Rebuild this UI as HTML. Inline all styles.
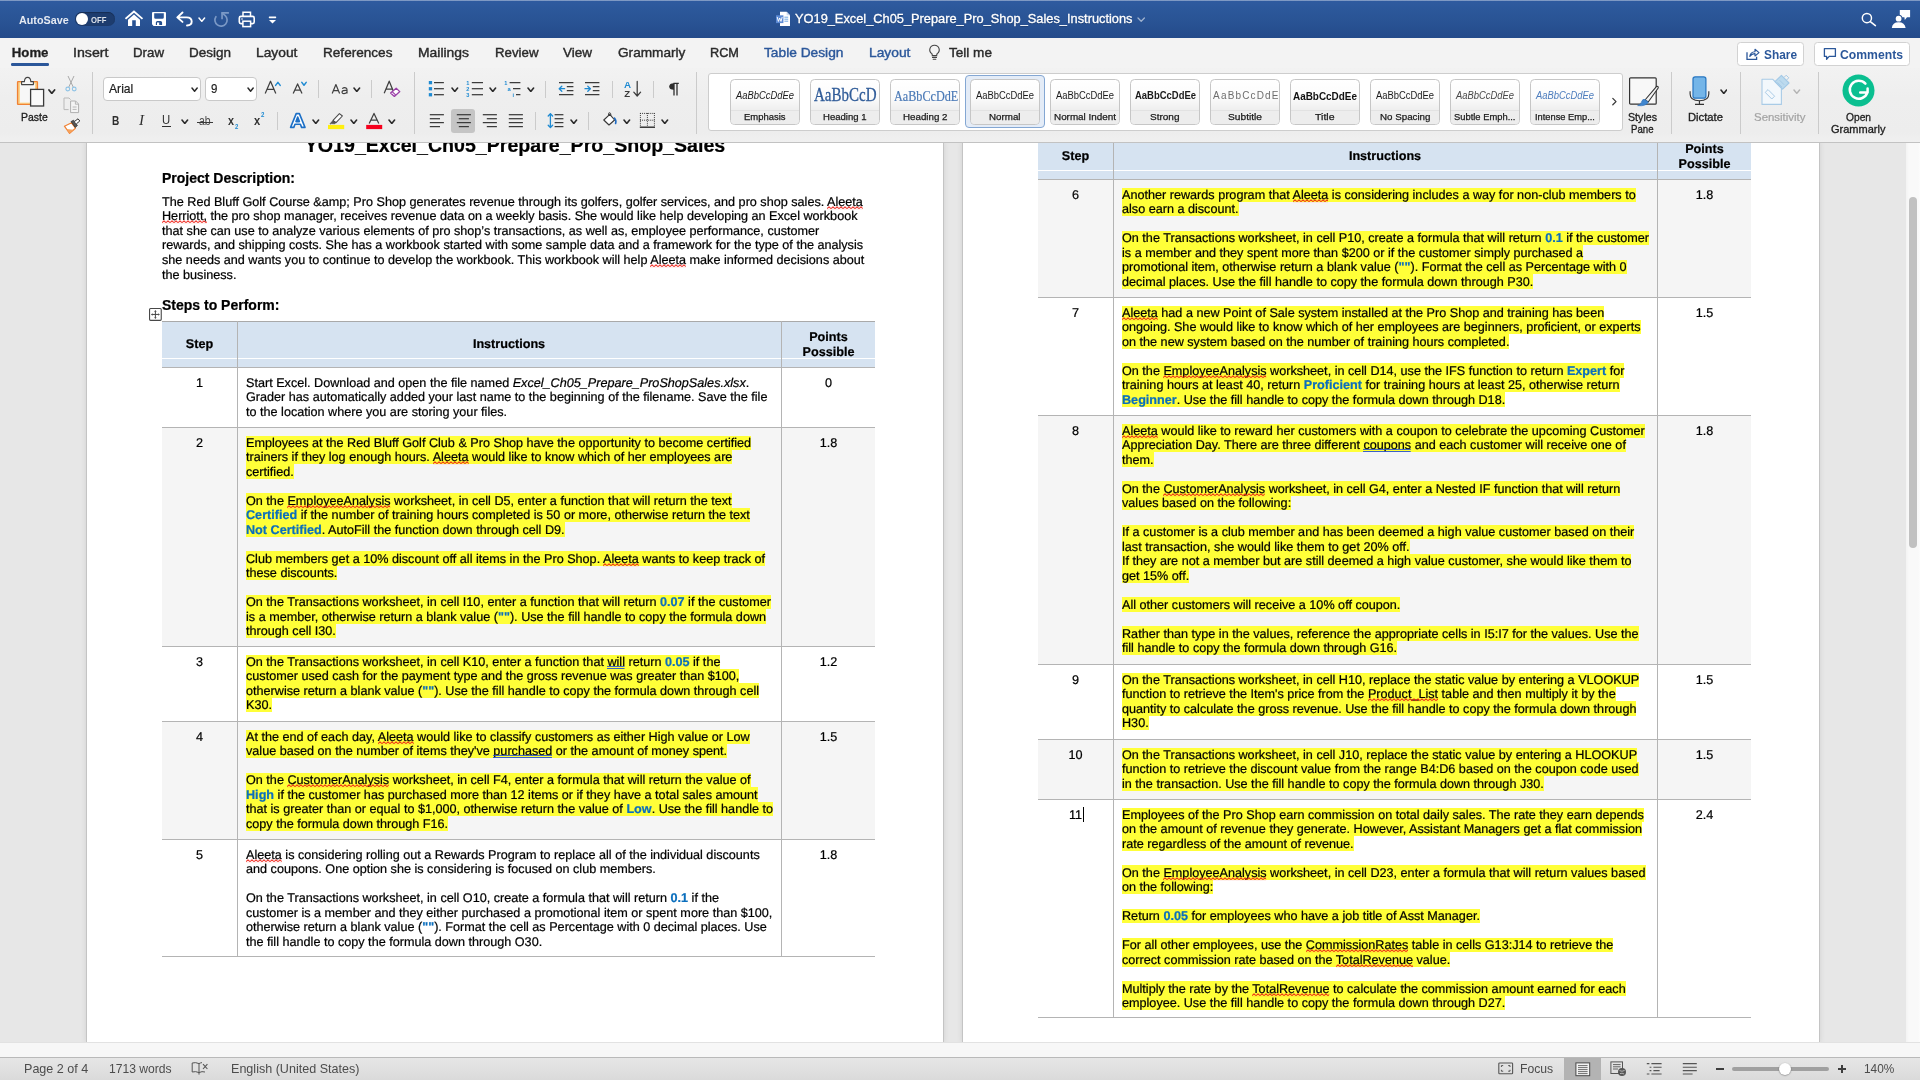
<!DOCTYPE html>
<html><head><meta charset="utf-8"><title>Word</title>
<style>
html,body{margin:0;padding:0;}
body{width:1920px;height:1080px;overflow:hidden;position:relative;background:#e7e7e7;
 font-family:"Liberation Sans",sans-serif;color:#000;}
*{box-sizing:border-box;}
#doc{position:absolute;left:0;top:0;width:1920px;height:1042px;overflow:hidden;background:transparent;will-change:transform;}
.page{position:absolute;top:142px;height:900px;background:#fff;box-shadow:0 0 0 1px #c4c4c4,0 0 6px 1px rgba(0,0,0,0.09);}
.t{position:absolute;text-rendering:geometricPrecision;font-size:12.634px;line-height:14.49px;height:14.49px;white-space:nowrap;color:#000;}
.t.c{text-align:center;}
.t.b{font-weight:bold;height:auto;}
.hl{background:#ffff38;display:inline-block;vertical-align:top;}
.tx{position:relative;}
.nh{display:inline-block;vertical-align:top;}
.bl{color:#0a6ebd;font-weight:bold;}
.ttl{position:absolute;font-size:19.6px;line-height:24px;font-weight:bold;text-align:center;white-space:nowrap;}
.h2{position:absolute;font-size:14px;line-height:16px;font-weight:bold;white-space:nowrap;}
.row{position:absolute;}
.hb{position:absolute;height:1px;background:#b4b4b4;}
.vb{position:absolute;width:1px;background:#b4b4b4;}
.mv{position:absolute;width:13px;height:13px;border:1px solid #6a6a6a;background:#fff;}
.mv svg{position:absolute;left:-0.5px;top:-0.5px;}
.sq{position:relative;z-index:2;}
.sq svg{position:absolute;left:0;top:11.2px;width:100%;height:3.6px;overflow:hidden;}
.gr{position:relative;z-index:2;}
.gr svg{position:absolute;left:0;top:10.6px;width:100%;height:4.4px;overflow:hidden;}
.cursor{display:inline-block;width:1.2px;height:15px;background:#000;vertical-align:top;margin-left:1px;margin-right:-2.2px;position:relative;top:-1px;}

/* ---------------- chrome ---------------- */
#titlebar{position:absolute;left:0;top:0;width:1920px;height:38px;background:linear-gradient(#2f5ba0 0px,#2c589b 8px,#295394 22px,#244b8a 38px);}
#tabs{position:absolute;left:0;top:38px;width:1920px;height:30px;background:#f3f3f3;}
#ribbon{position:absolute;left:0;top:68px;width:1920px;height:75px;background:linear-gradient(#f2f2f2 0,#eeeeee 30px,#ededed 64px,#f0f0f0 74px);border-bottom:1px solid #c2c2c2;}
#hscroll{position:absolute;left:0;top:1042px;width:1920px;height:15px;background:#f7f7f7;border-top:1px solid #e2e2e2;}
#status{position:absolute;left:0;top:1057px;width:1920px;height:23px;background:linear-gradient(#e6e6e6,#dadada);border-top:1px solid #b9b9b9;}
#vscroll{position:absolute;left:1906px;top:143px;width:14px;height:899px;background:linear-gradient(90deg,#f3f3f3,#f9f9f9 3px,#f9f9f9 12px,#fcfcfc);}
#vthumb{position:absolute;left:1909.2px;top:196.7px;width:7.6px;height:351.5px;border-radius:4px;background:#c1c1c1;}
.ui{position:absolute;white-space:nowrap;font-size:13px;line-height:16px;color:#262626;transform-origin:0 50%;}
.abs{position:absolute;}
.tile{border:1px solid #c6c6c6;border-radius:4.5px;background:linear-gradient(#ffffff 0%,#fbfbfb 40%,#efefef 67%,#efefef 100%);overflow:hidden;}
.tl{position:absolute;left:0;top:29.5px;width:100%;height:15px;background:#ededed;border-top:1px solid #e2e2e2;}
.t.p{font-size:12.648px;}
.t,.h2,.ttl{-webkit-text-stroke:0.22px currentColor;}
#chrome{position:absolute;left:0;top:0;width:1920px;height:1080px;will-change:transform;}

</style></head>
<body>
<svg width="0" height="0" style="position:absolute"><defs><pattern id="sqp" width="4" height="3.6" patternUnits="userSpaceOnUse"><path d="M-0.2 2.8 L2 0.8 L4.2 2.8" fill="none" stroke="#ee1a10" stroke-width="0.95" stroke-linejoin="round"/></pattern></defs></svg>
<div id="doc">
<div class="page" style="left:87px;width:856px"></div>
<div class="page" style="left:963px;width:856px"></div>
<div class="ttl" style="left:162px;top:132.5px;width:706px">YO19_Excel_Ch05_Prepare_Pro_Shop_Sales</div>
<div class="h2" style="left:162px;top:170px">Project Description:</div>
<div class="t p" style="left:162px;top:194.79px">The Red Bluff Golf Course &amp;amp; Pro Shop generates revenue through its golfers, golfer services, and pro shop sales. <span class="sq">Aleeta<svg><rect width="100%" height="3.6" fill="url(#sqp)"/></svg></span></div>
<div class="t p" style="left:162px;top:208.79px"><span class="sq">Herriott,<svg><rect width="100%" height="3.6" fill="url(#sqp)"/></svg></span> the pro shop manager, receives revenue data on a weekly basis. She would like help developing an Excel workbook</div>
<div class="t p" style="left:162px;top:223.79px">that she can use to analyze various elements of pro shop’s transactions, as well as, employee performance, customer</div>
<div class="t p" style="left:162px;top:237.79px">rewards, and shipping costs. She has a workbook started with some sample data and a framework for the type of the analysis</div>
<div class="t p" style="left:162px;top:252.79px">she needs and wants you to continue to develop the workbook. This workbook will help <span class="sq">Aleeta<svg><rect width="100%" height="3.6" fill="url(#sqp)"/></svg></span> make informed decisions about</div>
<div class="t p" style="left:162px;top:267.80px">the business.</div>
<div class="h2" style="left:162px;top:297px">Steps to Perform:</div>
<svg style="position:absolute;left:148px;top:307px" width="15" height="15" viewBox="0 0 15 15"><rect x="1.55" y="1.55" width="11.7" height="11.8" rx="1" fill="#fff" stroke="#484848" stroke-width="1.1"/><path d="M7.4 4 V10.9 M3.9 7.45 H10.9" stroke="#484848" stroke-width="1" fill="none"/><path d="M7.4 3 L8.7 4.7 H6.1 Z M7.4 11.9 L8.7 10.2 H6.1 Z M2.9 7.45 L4.6 6.15 V8.75 Z M11.9 7.45 L10.2 6.15 V8.75 Z" fill="#505050"/></svg>
<div class="row" style="left:162px;top:321px;width:713px;height:46px;background:#d6e3f1"></div>
<div class="hb" style="left:162px;top:321px;width:713px;background:#a9a9a9"></div>
<div class="hb" style="left:162px;top:358px;width:713px;background:#fff"></div>
<div class="hb" style="left:162px;top:367px;width:713px"></div>
<div class="t c b" style="left:162px;top:337.455px;width:75px">Step</div>
<div class="t c b" style="left:237px;top:337.455px;width:544px">Instructions</div>
<div class="t c b" style="left:782px;top:330.41px;width:93px">Points<br>Possible</div>
<div class="row" style="left:162px;top:368px;width:713px;height:60px;background:#fff"></div>
<div class="row" style="left:162px;top:428px;width:713px;height:219px;background:#f5f5f5"></div>
<div class="row" style="left:162px;top:647px;width:713px;height:75px;background:#fff"></div>
<div class="row" style="left:162px;top:722px;width:713px;height:118px;background:#f5f5f5"></div>
<div class="row" style="left:162px;top:840px;width:713px;height:117px;background:#fff"></div>
<div class="hb" style="left:162px;top:427px;width:713px"></div>
<div class="hb" style="left:162px;top:646px;width:713px"></div>
<div class="hb" style="left:162px;top:721px;width:713px"></div>
<div class="hb" style="left:162px;top:839px;width:713px"></div>
<div class="hb" style="left:162px;top:956px;width:713px"></div>
<div class="t c" style="left:162px;top:375.80px;width:75px">1</div>
<div class="t c" style="left:782px;top:375.80px;width:93px">0</div>
<div class="t" style="left:246px;top:376px;height:14px"><span class="nh" style="height:14px"><span class="tx" style="top:-0.20px">Start Excel. Download and open the file named <i>Excel_Ch05_Prepare_ProShopSales.xlsx</i>.</span></span></div>
<div class="t" style="left:246px;top:390px;height:14px"><span class="nh" style="height:14px"><span class="tx" style="top:-0.20px">Grader has automatically added your last name to the beginning of the filename. Save the file</span></span></div>
<div class="t" style="left:246px;top:404px;height:15px"><span class="nh" style="height:15px"><span class="tx" style="top:0.80px">to the location where you are storing your files.</span></span></div>
<div class="t c" style="left:162px;top:435.80px;width:75px">2</div>
<div class="t c" style="left:782px;top:435.80px;width:93px">1.8</div>
<div class="t" style="left:246px;top:436px;height:14px"><span class="hl" style="height:14px"><span class="tx" style="top:-0.20px">Employees at the Red Bluff Golf Club &amp; Pro Shop have the opportunity to become certified</span></span></div>
<div class="t" style="left:246px;top:450px;height:14px"><span class="hl" style="height:14px"><span class="tx" style="top:-0.20px">trainers if they log enough hours. <span class="sq">Aleeta<svg><rect width="100%" height="3.6" fill="url(#sqp)"/></svg></span> would like to know which of her employees are</span></span></div>
<div class="t" style="left:246px;top:464px;height:15px"><span class="hl" style="height:15px"><span class="tx" style="top:0.80px">certified.</span></span></div>
<div class="t" style="left:246px;top:493px;height:15px"><span class="hl" style="height:15px"><span class="tx" style="top:0.80px">On the <span class="sq">EmployeeAnalysis<svg><rect width="100%" height="3.6" fill="url(#sqp)"/></svg></span> worksheet, in cell D5, enter a function that will return the text</span></span></div>
<div class="t" style="left:246px;top:508px;height:14px"><span class="hl" style="height:14px"><span class="tx" style="top:-0.20px"><b class="bl">Certified</b> if the number of training hours completed is 50 or more, otherwise return the text</span></span></div>
<div class="t" style="left:246px;top:522px;height:15px"><span class="hl" style="height:15px"><span class="tx" style="top:0.79px"><b class="bl">Not Certified</b>. AutoFill the function down through cell D9.</span></span></div>
<div class="t" style="left:246px;top:551px;height:15px"><span class="hl" style="height:15px"><span class="tx" style="top:0.79px">Club members get a 10% discount off all items in the Pro Shop. <span class="sq">Aleeta<svg><rect width="100%" height="3.6" fill="url(#sqp)"/></svg></span> wants to keep track of</span></span></div>
<div class="t" style="left:246px;top:566px;height:14px"><span class="hl" style="height:14px"><span class="tx" style="top:-0.21px">these discounts.</span></span></div>
<div class="t" style="left:246px;top:595px;height:14px"><span class="hl" style="height:14px"><span class="tx" style="top:-0.21px">On the Transactions worksheet, in cell I10, enter a function that will return <b class="bl">0.07</b> if the customer</span></span></div>
<div class="t" style="left:246px;top:609px;height:15px"><span class="hl" style="height:15px"><span class="tx" style="top:0.79px">is a member, otherwise return a blank value (<b class="bl">""</b>). Use the fill handle to copy the formula down</span></span></div>
<div class="t" style="left:246px;top:624px;height:14px"><span class="hl" style="height:14px"><span class="tx" style="top:-0.21px">through cell I30.</span></span></div>
<div class="t c" style="left:162px;top:654.79px;width:75px">3</div>
<div class="t c" style="left:782px;top:654.79px;width:93px">1.2</div>
<div class="t" style="left:246px;top:655px;height:14px"><span class="hl" style="height:14px"><span class="tx" style="top:-0.21px">On the Transactions worksheet, in cell K10, enter a function that <span class="gr">will<svg><rect x="0" y="0.95" width="100%" height="0.9" fill="#2450d8"/><rect x="0" y="3" width="100%" height="0.9" fill="#2450d8"/></svg></span> return <b class="bl">0.05</b> if the</span></span></div>
<div class="t" style="left:246px;top:669px;height:14px"><span class="hl" style="height:14px"><span class="tx" style="top:-0.21px">customer used cash for the payment type and the gross revenue was greater than $100,</span></span></div>
<div class="t" style="left:246px;top:683px;height:15px"><span class="hl" style="height:15px"><span class="tx" style="top:0.79px">otherwise return a blank value (<b class="bl">""</b>). Use the fill handle to copy the formula down through cell</span></span></div>
<div class="t" style="left:246px;top:698px;height:14px"><span class="hl" style="height:14px"><span class="tx" style="top:-0.21px">K30.</span></span></div>
<div class="t c" style="left:162px;top:729.79px;width:75px">4</div>
<div class="t c" style="left:782px;top:729.79px;width:93px">1.5</div>
<div class="t" style="left:246px;top:730px;height:14px"><span class="hl" style="height:14px"><span class="tx" style="top:-0.21px">At the end of each day, <span class="sq">Aleeta<svg><rect width="100%" height="3.6" fill="url(#sqp)"/></svg></span> would like to classify customers as either High value or Low</span></span></div>
<div class="t" style="left:246px;top:744px;height:14px"><span class="hl" style="height:14px"><span class="tx" style="top:-0.21px">value based on the number of items they've <span class="gr">purchased<svg><rect x="0" y="0.95" width="100%" height="0.9" fill="#2450d8"/><rect x="0" y="3" width="100%" height="0.9" fill="#2450d8"/></svg></span> or the amount of money spent.</span></span></div>
<div class="t" style="left:246px;top:773px;height:14px"><span class="hl" style="height:14px"><span class="tx" style="top:-0.21px">On the <span class="sq">CustomerAnalysis<svg><rect width="100%" height="3.6" fill="url(#sqp)"/></svg></span> worksheet, in cell F4, enter a formula that will return the value of</span></span></div>
<div class="t" style="left:246px;top:787px;height:15px"><span class="hl" style="height:15px"><span class="tx" style="top:0.79px"><b class="bl">High</b> if the customer has purchased more than 12 items or if they have a total sales amount</span></span></div>
<div class="t" style="left:246px;top:802px;height:14px"><span class="hl" style="height:14px"><span class="tx" style="top:-0.21px">that is greater than or equal to $1,000, otherwise return the value of <b class="bl">Low</b>. Use the fill handle to</span></span></div>
<div class="t" style="left:246px;top:816px;height:15px"><span class="hl" style="height:15px"><span class="tx" style="top:0.79px">copy the formula down through F16.</span></span></div>
<div class="t c" style="left:162px;top:847.79px;width:75px">5</div>
<div class="t c" style="left:782px;top:847.79px;width:93px">1.8</div>
<div class="t" style="left:246px;top:848px;height:14px"><span class="nh" style="height:14px"><span class="tx" style="top:-0.21px"><span class="sq">Aleeta<svg><rect width="100%" height="3.6" fill="url(#sqp)"/></svg></span> is considering rolling out a Rewards Program to replace all of the individual discounts</span></span></div>
<div class="t" style="left:246px;top:862px;height:14px"><span class="nh" style="height:14px"><span class="tx" style="top:-0.21px">and coupons. One option she is considering is focused on club members.</span></span></div>
<div class="t" style="left:246px;top:891px;height:14px"><span class="nh" style="height:14px"><span class="tx" style="top:-0.21px">On the Transactions worksheet, in cell O10, create a formula that will return <b class="bl">0.1</b> if the</span></span></div>
<div class="t" style="left:246px;top:905px;height:15px"><span class="nh" style="height:15px"><span class="tx" style="top:0.79px">customer is a member and they either purchased a promotional item or spent more than $100,</span></span></div>
<div class="t" style="left:246px;top:920px;height:14px"><span class="nh" style="height:14px"><span class="tx" style="top:-0.21px">otherwise return a blank value (<b class="bl">""</b>). Format the cell as Percentage with 0 decimal places. Use</span></span></div>
<div class="t" style="left:246px;top:934px;height:15px"><span class="nh" style="height:15px"><span class="tx" style="top:0.79px">the fill handle to copy the formula down through O30.</span></span></div>
<div class="vb" style="left:237px;top:321px;height:636px"></div>
<div class="vb" style="left:781px;top:321px;height:636px"></div>
<div class="row" style="left:1038px;top:133px;width:713px;height:46px;background:#d6e3f1"></div>
<div class="hb" style="left:1038px;top:133px;width:713px;background:#a9a9a9"></div>
<div class="hb" style="left:1038px;top:170px;width:713px;background:#fff"></div>
<div class="hb" style="left:1038px;top:179px;width:713px"></div>
<div class="t c b" style="left:1038px;top:149.455px;width:75px">Step</div>
<div class="t c b" style="left:1113px;top:149.455px;width:544px">Instructions</div>
<div class="t c b" style="left:1658px;top:142.41px;width:93px">Points<br>Possible</div>
<div class="row" style="left:1038px;top:180px;width:713px;height:118px;background:#f5f5f5"></div>
<div class="row" style="left:1038px;top:298px;width:713px;height:118px;background:#fff"></div>
<div class="row" style="left:1038px;top:416px;width:713px;height:249px;background:#f5f5f5"></div>
<div class="row" style="left:1038px;top:665px;width:713px;height:75px;background:#fff"></div>
<div class="row" style="left:1038px;top:740px;width:713px;height:60px;background:#f5f5f5"></div>
<div class="row" style="left:1038px;top:800px;width:713px;height:218px;background:#fff"></div>
<div class="hb" style="left:1038px;top:297px;width:713px"></div>
<div class="hb" style="left:1038px;top:415px;width:713px"></div>
<div class="hb" style="left:1038px;top:664px;width:713px"></div>
<div class="hb" style="left:1038px;top:739px;width:713px"></div>
<div class="hb" style="left:1038px;top:799px;width:713px"></div>
<div class="hb" style="left:1038px;top:1017px;width:713px"></div>
<div class="t c" style="left:1038px;top:187.79px;width:75px">6</div>
<div class="t c" style="left:1658px;top:187.79px;width:93px">1.8</div>
<div class="t" style="left:1122px;top:188px;height:14px"><span class="hl" style="height:14px"><span class="tx" style="top:-0.21px">Another rewards program that <span class="sq">Aleeta<svg><rect width="100%" height="3.6" fill="url(#sqp)"/></svg></span> is considering includes a way for non-club members to</span></span></div>
<div class="t" style="left:1122px;top:202px;height:14px"><span class="hl" style="height:14px"><span class="tx" style="top:-0.21px">also earn a discount.</span></span></div>
<div class="t" style="left:1122px;top:231px;height:14px"><span class="hl" style="height:14px"><span class="tx" style="top:-0.21px">On the Transactions worksheet, in cell P10, create a formula that will return <b class="bl">0.1</b> if the customer</span></span></div>
<div class="t" style="left:1122px;top:245px;height:15px"><span class="hl" style="height:15px"><span class="tx" style="top:0.79px">is a member and they spent more than $200 or if the customer simply purchased a</span></span></div>
<div class="t" style="left:1122px;top:260px;height:14px"><span class="hl" style="height:14px"><span class="tx" style="top:-0.20px">promotional item, otherwise return a blank value (<b class="bl">""</b>). Format the cell as Percentage with 0</span></span></div>
<div class="t" style="left:1122px;top:274px;height:15px"><span class="hl" style="height:15px"><span class="tx" style="top:0.80px">decimal places. Use the fill handle to copy the formula down through P30.</span></span></div>
<div class="t c" style="left:1038px;top:305.80px;width:75px">7</div>
<div class="t c" style="left:1658px;top:305.80px;width:93px">1.5</div>
<div class="t" style="left:1122px;top:306px;height:14px"><span class="hl" style="height:14px"><span class="tx" style="top:-0.20px"><span class="sq">Aleeta<svg><rect width="100%" height="3.6" fill="url(#sqp)"/></svg></span> had a new Point of Sale system installed at the Pro Shop and training has been</span></span></div>
<div class="t" style="left:1122px;top:320px;height:14px"><span class="hl" style="height:14px"><span class="tx" style="top:-0.20px">ongoing. She would like to know which of her employees are beginners, proficient, or experts</span></span></div>
<div class="t" style="left:1122px;top:334px;height:15px"><span class="hl" style="height:15px"><span class="tx" style="top:0.80px">on the new system based on the number of training hours completed.</span></span></div>
<div class="t" style="left:1122px;top:363px;height:15px"><span class="hl" style="height:15px"><span class="tx" style="top:0.80px">On the <span class="sq">EmployeeAnalysis<svg><rect width="100%" height="3.6" fill="url(#sqp)"/></svg></span> worksheet, in cell D14, use the IFS function to return <b class="bl">Expert</b> for</span></span></div>
<div class="t" style="left:1122px;top:378px;height:14px"><span class="hl" style="height:14px"><span class="tx" style="top:-0.20px">training hours at least 40, return <b class="bl">Proficient</b> for training hours at least 25, otherwise return</span></span></div>
<div class="t" style="left:1122px;top:392px;height:15px"><span class="hl" style="height:15px"><span class="tx" style="top:0.80px"><b class="bl">Beginner</b>. Use the fill handle to copy the formula down through D18.</span></span></div>
<div class="t c" style="left:1038px;top:423.80px;width:75px">8</div>
<div class="t c" style="left:1658px;top:423.80px;width:93px">1.8</div>
<div class="t" style="left:1122px;top:424px;height:14px"><span class="hl" style="height:14px"><span class="tx" style="top:-0.20px"><span class="sq">Aleeta<svg><rect width="100%" height="3.6" fill="url(#sqp)"/></svg></span> would like to reward her customers with a coupon to celebrate the upcoming Customer</span></span></div>
<div class="t" style="left:1122px;top:438px;height:14px"><span class="hl" style="height:14px"><span class="tx" style="top:-0.20px">Appreciation Day. There are three different <span class="gr">coupons<svg><rect x="0" y="0.95" width="100%" height="0.9" fill="#2450d8"/><rect x="0" y="3" width="100%" height="0.9" fill="#2450d8"/></svg></span> and each customer will receive one of</span></span></div>
<div class="t" style="left:1122px;top:452px;height:15px"><span class="hl" style="height:15px"><span class="tx" style="top:0.80px">them.</span></span></div>
<div class="t" style="left:1122px;top:481px;height:15px"><span class="hl" style="height:15px"><span class="tx" style="top:0.80px">On the <span class="sq">CustomerAnalysis<svg><rect width="100%" height="3.6" fill="url(#sqp)"/></svg></span> worksheet, in cell G4, enter a Nested IF function that will return</span></span></div>
<div class="t" style="left:1122px;top:496px;height:14px"><span class="hl" style="height:14px"><span class="tx" style="top:-0.20px">values based on the following:</span></span></div>
<div class="t" style="left:1122px;top:525px;height:14px"><span class="hl" style="height:14px"><span class="tx" style="top:-0.21px">If a customer is a club member and has been deemed a high value customer based on their</span></span></div>
<div class="t" style="left:1122px;top:539px;height:15px"><span class="hl" style="height:15px"><span class="tx" style="top:0.79px">last transaction, she would like them to get 20% off.</span></span></div>
<div class="t" style="left:1122px;top:554px;height:14px"><span class="hl" style="height:14px"><span class="tx" style="top:-0.21px">If they are not a member but are still deemed a high value customer, she would like them to</span></span></div>
<div class="t" style="left:1122px;top:568px;height:15px"><span class="hl" style="height:15px"><span class="tx" style="top:0.79px">get 15% off.</span></span></div>
<div class="t" style="left:1122px;top:597px;height:15px"><span class="hl" style="height:15px"><span class="tx" style="top:0.79px">All other customers will receive a 10% off coupon.</span></span></div>
<div class="t" style="left:1122px;top:626px;height:15px"><span class="hl" style="height:15px"><span class="tx" style="top:0.79px">Rather than type in the values, reference the appropriate cells in I5:I7 for the values. Use the</span></span></div>
<div class="t" style="left:1122px;top:641px;height:14px"><span class="hl" style="height:14px"><span class="tx" style="top:-0.21px">fill handle to copy the formula down through G16.</span></span></div>
<div class="t c" style="left:1038px;top:672.79px;width:75px">9</div>
<div class="t c" style="left:1658px;top:672.79px;width:93px">1.5</div>
<div class="t" style="left:1122px;top:673px;height:14px"><span class="hl" style="height:14px"><span class="tx" style="top:-0.21px">On the Transactions worksheet, in cell H10, replace the static value by entering a VLOOKUP</span></span></div>
<div class="t" style="left:1122px;top:687px;height:14px"><span class="hl" style="height:14px"><span class="tx" style="top:-0.21px">function to retrieve the Item's price from the <span class="sq">Product_List<svg><rect width="100%" height="3.6" fill="url(#sqp)"/></svg></span> table and then multiply it by the</span></span></div>
<div class="t" style="left:1122px;top:701px;height:15px"><span class="hl" style="height:15px"><span class="tx" style="top:0.79px">quantity to calculate the gross revenue. Use the fill handle to copy the formula down through</span></span></div>
<div class="t" style="left:1122px;top:716px;height:14px"><span class="hl" style="height:14px"><span class="tx" style="top:-0.21px">H30.</span></span></div>
<div class="t c" style="left:1038px;top:747.79px;width:75px">10</div>
<div class="t c" style="left:1658px;top:747.79px;width:93px">1.5</div>
<div class="t" style="left:1122px;top:748px;height:14px"><span class="hl" style="height:14px"><span class="tx" style="top:-0.21px">On the Transactions worksheet, in cell J10, replace the static value by entering a HLOOKUP</span></span></div>
<div class="t" style="left:1122px;top:762px;height:14px"><span class="hl" style="height:14px"><span class="tx" style="top:-0.21px">function to retrieve the discount value from the range B4:D6 based on the coupon code used</span></span></div>
<div class="t" style="left:1122px;top:776px;height:15px"><span class="hl" style="height:15px"><span class="tx" style="top:0.79px">in the transaction. Use the fill handle to copy the formula down through J30.</span></span></div>
<div class="t c" style="left:1038px;top:807.79px;width:75px">11<span class="cursor"></span></div>
<div class="t c" style="left:1658px;top:807.79px;width:93px">2.4</div>
<div class="t" style="left:1122px;top:808px;height:14px"><span class="hl" style="height:14px"><span class="tx" style="top:-0.21px">Employees of the Pro Shop earn commission on total daily sales. The rate they earn depends</span></span></div>
<div class="t" style="left:1122px;top:822px;height:14px"><span class="hl" style="height:14px"><span class="tx" style="top:-0.21px">on the amount of revenue they generate. However, Assistant Managers get a flat commission</span></span></div>
<div class="t" style="left:1122px;top:836px;height:15px"><span class="hl" style="height:15px"><span class="tx" style="top:0.79px">rate regardless of the amount of revenue.</span></span></div>
<div class="t" style="left:1122px;top:865px;height:15px"><span class="hl" style="height:15px"><span class="tx" style="top:0.79px">On the <span class="sq">EmployeeAnalysis<svg><rect width="100%" height="3.6" fill="url(#sqp)"/></svg></span> worksheet, in cell D23, enter a formula that will return values based</span></span></div>
<div class="t" style="left:1122px;top:880px;height:14px"><span class="hl" style="height:14px"><span class="tx" style="top:-0.21px">on the following:</span></span></div>
<div class="t" style="left:1122px;top:909px;height:14px"><span class="hl" style="height:14px"><span class="tx" style="top:-0.21px">Return <b class="bl">0.05</b> for employees who have a job title of Asst Manager.</span></span></div>
<div class="t" style="left:1122px;top:938px;height:14px"><span class="hl" style="height:14px"><span class="tx" style="top:-0.21px">For all other employees, use the <span class="sq">CommissionRates<svg><rect width="100%" height="3.6" fill="url(#sqp)"/></svg></span> table in cells G13:J14 to retrieve the</span></span></div>
<div class="t" style="left:1122px;top:952px;height:15px"><span class="hl" style="height:15px"><span class="tx" style="top:0.79px">correct commission rate based on the <span class="sq">TotalRevenue<svg><rect width="100%" height="3.6" fill="url(#sqp)"/></svg></span> value.</span></span></div>
<div class="t" style="left:1122px;top:981px;height:15px"><span class="hl" style="height:15px"><span class="tx" style="top:0.79px">Multiply the rate by the <span class="sq">TotalRevenue<svg><rect width="100%" height="3.6" fill="url(#sqp)"/></svg></span> to calculate the commission amount earned for each</span></span></div>
<div class="t" style="left:1122px;top:996px;height:14px"><span class="hl" style="height:14px"><span class="tx" style="top:-0.21px">employee. Use the fill handle to copy the formula down through D27.</span></span></div>
<div class="vb" style="left:1113px;top:142px;height:876px"></div>
<div class="vb" style="left:1657px;top:142px;height:876px"></div>
</div>
<div id="chrome">
<div id="vscroll"></div><div id="vthumb"></div>
<div id="hscroll"></div>
<div id="status"></div>
<div id="titlebar"></div>
<div id="tabs"></div>
<div id="ribbon"></div>
<div class="abs" style="left:0px;top:0px;width:1920px;height:1px;background:rgba(255,255,255,0.38);"></div>
<div class="ui" style="left:19.30px;top:11.60px;font-size:11.2px;color:rgba(255,255,255,0.88);font-weight:700;transform:scaleX(0.9621);">AutoSave</div>
<div class="abs" style="left:75.2px;top:12.2px;width:39.6px;height:14px;border-radius:7px;background:#1d3c6e;box-shadow:inset 0 0.5px 1px rgba(0,0,0,.45);"></div>
<div class="abs" style="left:75.8px;top:12.8px;width:12.4px;height:12.4px;border-radius:50%;background:#fff;"></div>
<div class="ui" style="left:91.20px;top:11.60px;font-size:9px;color:rgba(255,255,255,0.85);font-weight:700;transform:scaleX(0.8558);">OFF</div>
<svg class="abs" style="left:124px;top:9px;" width="20" height="19" viewBox="0 0 20 19"><path d="M2.2 9.3 L9.98 2.5 L17.8 9.3" fill="none" stroke="#fff" stroke-width="1.85" stroke-linecap="square" stroke-linejoin="miter"/><path d="M4 10.7 L9.98 5.6 L16 10.7 V17 H11.8 V11.2 H8.2 V17 H4 Z" fill="#fff"/></svg>
<svg class="abs" style="left:151px;top:11px;" width="16" height="16" viewBox="0 0 16 16"><path d="M1 1.9 Q1 0.9 2 0.9 H14 Q15 0.9 15 1.9 V14 Q15 15 14 15 H2.6 L1 13.2 Z M3.2 2.2 V6.4 Q3.2 7.8 4.6 7.8 H11.4 Q12.8 7.8 12.8 6.4 V2.2 Z" fill="#fff" fill-rule="evenodd"/><path d="M4.85 13.9 V11.6 Q4.85 10 6.4 10 H9.5 Q11.1 10 11.1 11.6 V13.9 H8.2 V11.6 H6 V13.9 Z" fill="#234e8e"/></svg>
<svg class="abs" style="left:175px;top:10px;" width="20" height="18" viewBox="0 0 20 18"><path d="M7.5 2.5 L2.3 7.4 L7.5 11.9 M2.8 7.4 H11.6 Q16.7 7.4 16.7 11.6 Q16.7 15.4 12 15.5" fill="none" stroke="#fff" stroke-width="1.9" stroke-linecap="round" stroke-linejoin="round"/></svg>
<svg class="abs" style="left:198.3px;top:16.8px;" width="7.6" height="5.4" viewBox="0 0 7.6 5.4"><path d="M1 1 L3.8 4.4 L6.6 1" fill="none" stroke="#fff" stroke-width="1.5" stroke-linecap="round" stroke-linejoin="round"/></svg>
<svg class="abs" style="left:208px;top:8px;" width="28" height="22" viewBox="0 0 28 22"><path d="M7.9 8.7 A6.1 6.1 0 1 0 17.2 7.6 L14.3 5.1" fill="none" stroke="#7b99c6" stroke-width="1.65" stroke-linecap="round" stroke-linejoin="round"/><path d="M13.4 4.9 H20.9 M14.05 4.3 V11.3" fill="none" stroke="#7b99c6" stroke-width="1.65"/></svg>
<svg class="abs" style="left:237.8px;top:10.6px;" width="17.5" height="17" viewBox="0 0 17.5 17"><path d="M5 5.2 V1.3 H12.5 V5.2" fill="none" stroke="#fff" stroke-width="1.5"/><rect x="1.3" y="5.4" width="14.9" height="7.2" rx="1.6" fill="none" stroke="#fff" stroke-width="1.6"/><rect x="4.9" y="10.2" width="7.7" height="5.4" fill="#2a5596" stroke="#fff" stroke-width="1.5"/><circle cx="4" cy="8" r="0.8" fill="#fff"/></svg>
<svg class="abs" style="left:267.5px;top:15.6px;" width="9" height="8.4" viewBox="0 0 9 8.4"><rect x="0.8" y="0.6" width="7.4" height="1.6" rx="0.6" fill="#fff"/><path d="M1 4 H8 L4.5 7.6 Z" fill="#fff"/></svg>
<svg class="abs" style="left:775px;top:11px;" width="16" height="16" viewBox="0 0 16 16"><path d="M5 0.8 H11.6 L15 4.2 V15 H5 Z" fill="#fff"/><path d="M11.6 0.8 V4.2 H15 Z" fill="#c9d8ee"/><path d="M9.4 6.2 H13.2 M9.4 8.2 H13.2 M9.4 10.2 H13.2" stroke="#5d9de0" stroke-width="0.9"/><rect x="1" y="4.3" width="7.4" height="7.8" fill="#5c8ad4"/><path d="M2.2 6 L3.4 10.4 L4.7 7 L6 10.4 L7.2 6" fill="none" stroke="#fff" stroke-width="0.95" stroke-linejoin="round"/></svg>
<div class="ui" style="left:795.00px;top:11.40px;font-size:13px;color:#fff;transform:scaleX(0.9852);-webkit-text-stroke:0.3px #fff;text-shadow:0 0.5px 1px rgba(0,0,0,.25);">YO19_Excel_Ch05_Prepare_Pro_Shop_Sales_Instructions</div>
<svg class="abs" style="left:1137px;top:17px;" width="8.4" height="5.2" viewBox="0 0 8.4 5.2"><path d="M1 1 L4.2 4.2 L7.4 1" fill="none" stroke="rgba(255,255,255,0.55)" stroke-width="1.3" stroke-linecap="round" stroke-linejoin="round"/></svg>
<svg class="abs" style="left:1860px;top:11px;" width="18" height="17" viewBox="0 0 18 17"><circle cx="6.9" cy="7.1" r="4.6" fill="none" stroke="#fff" stroke-width="1.45"/><path d="M10.3 10.6 L15.4 14.6" stroke="#fff" stroke-width="1.6" stroke-linecap="round"/></svg>
<svg class="abs" style="left:1890px;top:8px;" width="22" height="22" viewBox="0 0 22 22"><path d="M9.8 1.9 H20.1 V9.3 H17 L14.8 12 L14.4 9.3 H9.8 Z" fill="#fff"/><circle cx="8.6" cy="10.7" r="3.9" fill="#28508f"/><circle cx="8.6" cy="10.7" r="2.9" fill="#fff"/><path d="M1.8 19.9 Q2.4 14.3 8.6 14.3 Q14.8 14.3 15.6 19.9 Z" fill="#fff"/></svg>
<div class="ui" style="left:11.80px;top:45.10px;font-size:13.2px;color:#1e1e1e;font-weight:700;-webkit-text-stroke:0.3px #1e1e1e;">Home</div>
<div class="ui" style="left:72.50px;top:45.10px;font-size:13.2px;color:#2a2a2a;transform:scaleX(1.0753);-webkit-text-stroke:0.4px #2a2a2a;">Insert</div>
<div class="ui" style="left:133.00px;top:45.10px;font-size:13.2px;color:#2a2a2a;transform:scaleX(1.0064);-webkit-text-stroke:0.4px #2a2a2a;">Draw</div>
<div class="ui" style="left:189.00px;top:45.10px;font-size:13.2px;color:#2a2a2a;transform:scaleX(1.0221);-webkit-text-stroke:0.4px #2a2a2a;">Design</div>
<div class="ui" style="left:256.00px;top:45.10px;font-size:13.2px;color:#2a2a2a;transform:scaleX(1.0471);-webkit-text-stroke:0.4px #2a2a2a;">Layout</div>
<div class="ui" style="left:323.00px;top:45.10px;font-size:13.2px;color:#2a2a2a;transform:scaleX(1.0296);-webkit-text-stroke:0.4px #2a2a2a;">References</div>
<div class="ui" style="left:418.00px;top:45.10px;font-size:13.2px;color:#2a2a2a;transform:scaleX(1.0533);-webkit-text-stroke:0.4px #2a2a2a;">Mailings</div>
<div class="ui" style="left:495.00px;top:45.10px;font-size:13.2px;color:#2a2a2a;transform:scaleX(1.0050);-webkit-text-stroke:0.4px #2a2a2a;">Review</div>
<div class="ui" style="left:563.00px;top:45.10px;font-size:13.2px;color:#2a2a2a;transform:scaleX(1.0221);-webkit-text-stroke:0.4px #2a2a2a;">View</div>
<div class="ui" style="left:617.50px;top:45.10px;font-size:13.2px;color:#2a2a2a;transform:scaleX(1.0342);-webkit-text-stroke:0.4px #2a2a2a;">Grammarly</div>
<div class="ui" style="left:710.00px;top:45.10px;font-size:13.2px;color:#2a2a2a;transform:scaleX(0.9647);-webkit-text-stroke:0.4px #2a2a2a;">RCM</div>
<div class="abs" style="left:11px;top:63.1px;width:37.8px;height:2.6px;background:#2b579a;border-radius:1.3px;"></div>
<div class="ui" style="left:764.00px;top:45.10px;font-size:13.2px;color:#2b579a;transform:scaleX(1.0417);-webkit-text-stroke:0.4px #2b579a;">Table Design</div>
<div class="ui" style="left:869.00px;top:45.10px;font-size:13.2px;color:#2b579a;transform:scaleX(1.0471);-webkit-text-stroke:0.4px #2b579a;">Layout</div>
<svg class="abs" style="left:927.5px;top:44px;" width="13" height="17" viewBox="0 0 13 17"><path d="M6.5 1.2 A4.6 4.6 0 0 1 9.2 9.6 Q8.7 10.4 8.7 11.6 H4.3 Q4.3 10.4 3.8 9.6 A4.6 4.6 0 0 1 6.5 1.2 Z" fill="none" stroke="#444" stroke-width="1.1"/><path d="M4.5 13.4 H8.5 M5.2 15.2 H7.8" stroke="#444" stroke-width="1.1" stroke-linecap="round"/></svg>
<div class="ui" style="left:949.00px;top:45.10px;font-size:13.2px;color:#2a2a2a;transform:scaleX(1.0284);-webkit-text-stroke:0.4px #2a2a2a;">Tell me</div>
<div class="abs" style="left:1737px;top:42px;width:66.5px;height:23.5px;background:#fff;border:1px solid #d2d2d2;border-radius:3.5px;"></div>
<svg class="abs" style="left:1744.5px;top:46.5px;" width="15" height="14" viewBox="0 0 15 14"><path d="M2 5.2 V12.4 H11.6 V9.8" fill="none" stroke="#2b579a" stroke-width="1.3" stroke-linejoin="miter"/><path d="M4.8 9.4 Q5.4 5 10 4.8 V2.2 L14 5.6 L10 9 V6.6 Q6.8 6.4 4.8 9.4 Z" fill="none" stroke="#2b579a" stroke-width="1.15" stroke-linejoin="round"/></svg>
<div class="ui" style="left:1763.50px;top:46.90px;font-size:13px;color:#2b579a;font-weight:700;transform:scaleX(0.9133);">Share</div>
<div class="abs" style="left:1814px;top:42px;width:95.5px;height:23.5px;background:#fff;border:1px solid #d2d2d2;border-radius:3.5px;"></div>
<svg class="abs" style="left:1822.5px;top:47px;" width="14" height="14" viewBox="0 0 14 14"><path d="M1.4 1.6 H12.4 V9.4 H6.2 L3.6 12.2 V9.4 H1.4 Z" fill="none" stroke="#2b579a" stroke-width="1.3" stroke-linejoin="round"/></svg>
<div class="ui" style="left:1840.00px;top:46.90px;font-size:13px;color:#2b579a;font-weight:700;transform:scaleX(0.9378);">Comments</div>
<svg class="abs" style="left:16px;top:76px;" width="30" height="32" viewBox="0 0 30 32"><rect x="1.6" y="5.6" width="19.8" height="22.8" rx="0.6" fill="#fbd68f" stroke="#f08133" stroke-width="1.4"/><rect x="4" y="7.6" width="15" height="19" fill="#f7f7f7"/><path d="M5.6 8.6 V5.6 H8.4 Q8.6 1.4 11.6 1.4 Q14.6 1.4 14.8 5.6 H17.4 V8.6 Z" fill="#f7f7f7" stroke="#444" stroke-width="1.1" stroke-linejoin="round"/><rect x="14.6" y="13.4" width="13" height="16.6" fill="#fafafa" stroke="#3a3a3a" stroke-width="1.3"/></svg>
<div class="ui" style="left:20.60px;top:109.30px;font-size:11px;color:#1e1e1e;transform:scaleX(0.9492);-webkit-text-stroke:0.32px #1e1e1e;">Paste</div>
<svg class="abs" style="left:48.3px;top:88.7px;" width="7.6" height="5.4" viewBox="0 0 7.6 5.4"><path d="M1 1 L3.8 4.4 L6.6 1" fill="none" stroke="#2a2a2a" stroke-width="1.7" stroke-linecap="round" stroke-linejoin="round"/></svg>
<svg class="abs" style="left:65px;top:75px;" width="12" height="17" viewBox="0 0 12 17"><path d="M3 1 L8.2 12 M9 1 L3.8 12" stroke="#a9a9a9" stroke-width="1" fill="none"/><circle cx="2.8" cy="14" r="1.9" fill="none" stroke="#8ec3e6" stroke-width="1.1"/><circle cx="9.2" cy="14" r="1.9" fill="none" stroke="#8ec3e6" stroke-width="1.1"/></svg>
<svg class="abs" style="left:62.5px;top:96.5px;" width="17" height="17" viewBox="0 0 17 17"><path d="M5.6 12.6 H1 V1 H6 L7.6 2.6" fill="none" stroke="#b9b9b9" stroke-width="1"/><path d="M7.6 4 H12.6 L15.6 7 V15.6 H7.6 Z" fill="#f4f4f4" stroke="#b0b0b0" stroke-width="1"/><path d="M12.4 4.2 V7.2 H15.4" fill="none" stroke="#b0b0b0" stroke-width="0.9"/><path d="M9.6 10 H13.6 M9.6 12.4 H13.6" stroke="#b0b0b0" stroke-width="0.9"/></svg>
<svg class="abs" style="left:62.5px;top:118px;" width="18" height="17" viewBox="0 0 18 17"><path d="M1.4 8.2 L8.6 4.8 L12.4 10.2 L6.6 15.4 Z" fill="#fff" stroke="#f08133" stroke-width="1.2" stroke-linejoin="round"/><path d="M3.4 11 L6.6 15.2 L10.4 11.8 Z" fill="#f6a35c"/><path d="M8 3.6 L10.6 2.2 L14.4 7.6 L12.2 9.4 Z" fill="#555" stroke="#333" stroke-width="0.8"/><path d="M11.6 3.4 L15 0.8 L16.8 3 L13.4 5.8" fill="#fff" stroke="#333" stroke-width="1" stroke-linejoin="round"/></svg>
<div class="abs" style="left:92.2px;top:72.4px;width:1px;height:61.2px;background:#cbcbcb;"></div>
<div class="abs" style="left:103.4px;top:77px;width:97.9px;height:23.5px;background:#fff;border:1px solid #c9c9c9;border-radius:4px;"></div>
<div class="ui" style="left:109.40px;top:80.70px;font-size:12.6px;color:#1c1c1c;transform:scaleX(0.9640);-webkit-text-stroke:0.2px #1c1c1c;">Arial</div>
<svg class="abs" style="left:191px;top:86.8px;" width="7.2" height="5.2" viewBox="0 0 7.2 5.2"><path d="M1 1 L3.6 4.2 L6.2 1" fill="none" stroke="#2a2a2a" stroke-width="1.5" stroke-linecap="round" stroke-linejoin="round"/></svg>
<div class="abs" style="left:204.6px;top:77px;width:52.9px;height:23.5px;background:#fff;border:1px solid #c9c9c9;border-radius:4px;"></div>
<div class="ui" style="left:210.60px;top:80.90px;font-size:12.6px;color:#1c1c1c;transform:scaleX(0.9133);-webkit-text-stroke:0.2px #1c1c1c;">9</div>
<svg class="abs" style="left:246.8px;top:86.8px;" width="7.2" height="5.2" viewBox="0 0 7.2 5.2"><path d="M1 1 L3.6 4.2 L6.2 1" fill="none" stroke="#2a2a2a" stroke-width="1.5" stroke-linecap="round" stroke-linejoin="round"/></svg>
<svg class="abs" style="left:264px;top:79px;" width="18" height="16" viewBox="0 0 18 16"><path d="M1.2 14.6 L6.5 2.2 L11.8 14.6 M3 10.4 H10" fill="none" stroke="#3f3f3f" stroke-width="1.25" stroke-linejoin="round"/><path d="M11.6 6.4 L13.9 3.4 L16.2 6.4" fill="none" stroke="#1e8ad2" stroke-width="1.5" stroke-linecap="round" stroke-linejoin="round"/></svg>
<svg class="abs" style="left:291.5px;top:79px;" width="16" height="16" viewBox="0 0 16 16"><path d="M1.2 14.6 L5.6 4.9 L10 14.6 M2.8 11.2 H8.4" fill="none" stroke="#3f3f3f" stroke-width="1.25" stroke-linejoin="round"/><path d="M9.8 3.4 L12 6.2 L14.2 3.4" fill="none" stroke="#1e8ad2" stroke-width="1.5" stroke-linecap="round" stroke-linejoin="round"/></svg>
<div class="abs" style="left:317.9px;top:79.7px;width:1px;height:18.2px;background:#cbcbcb;"></div>
<svg class="abs" style="left:330.5px;top:83px;" width="18" height="12" viewBox="0 0 18 12"><path d="M1.2 10.6 L4.9 1.6 L8.6 10.6 M2.5 7.6 H7.3" fill="none" stroke="#3f3f3f" stroke-width="1.2" stroke-linejoin="round"/><path d="M11.2 5.6 Q13.4 3.8 15.4 5.2 Q16 5.8 16 7 V10.6 M16 7.4 Q11 7 11 9.2 Q11.2 10.8 13 10.7 Q14.8 10.6 16 9" fill="none" stroke="#3f3f3f" stroke-width="1.2"/></svg>
<svg class="abs" style="left:353.3px;top:86.7px;" width="7.6" height="5.4" viewBox="0 0 7.6 5.4"><path d="M1 1 L3.8 4.4 L6.6 1" fill="none" stroke="#2a2a2a" stroke-width="1.6" stroke-linecap="round" stroke-linejoin="round"/></svg>
<div class="abs" style="left:371.2px;top:79.7px;width:1px;height:18.2px;background:#cbcbcb;"></div>
<svg class="abs" style="left:383px;top:79px;" width="19" height="19" viewBox="0 0 19 19"><path d="M1.2 14.2 L6.2 2.2 L11.2 14.2 M3 10.2 H9.4" fill="none" stroke="#3f3f3f" stroke-width="1.25" stroke-linejoin="round"/><path d="M7.6 14 L13.2 9.2 L16.8 12.6 L11.4 17.4 Z" fill="#fff" stroke="#9b3fa8" stroke-width="1.3" stroke-linejoin="round"/><path d="M9.2 12.6 L12.8 16.2" stroke="#9b3fa8" stroke-width="1.2"/></svg>
<div class="abs" style="left:414px;top:72.2px;width:1px;height:61.4px;background:#cbcbcb;"></div>
<div class="ui" style="left:111.60px;top:112.60px;font-size:13.4px;color:#2e2e2e;font-weight:700;transform:scaleX(0.7543);">B</div>
<div class="ui" style="left:138.60px;top:112.60px;font-size:13.6px;color:#2e2e2e;font-style:italic;font-family:'Liberation Serif',serif;transform:scaleX(1.1039);">I</div>
<div class="ui" style="left:162.40px;top:112.20px;font-size:12.6px;color:#2e2e2e;transform:scaleX(0.9011);">U</div>
<div class="abs" style="left:162px;top:126px;width:9px;height:1.1px;background:#2e2e2e;"></div>
<svg class="abs" style="left:181.3px;top:118.7px;" width="7.6" height="5.4" viewBox="0 0 7.6 5.4"><path d="M1 1 L3.8 4.4 L6.6 1" fill="none" stroke="#2a2a2a" stroke-width="1.6" stroke-linecap="round" stroke-linejoin="round"/></svg>
<div class="ui" style="left:199.20px;top:112.80px;font-size:12.4px;color:#4a4a4a;transform:scaleX(0.8410);">ab</div>
<div class="abs" style="left:197.1px;top:121.8px;width:15.7px;height:1px;background:#3a3a3a;"></div>
<div class="ui" style="left:227.80px;top:112.60px;font-size:13px;color:#333;font-weight:700;transform:scaleX(0.8298);">x</div>
<div class="ui" style="left:234.90px;top:119.00px;font-size:6.6px;color:#1e8ad2;font-weight:700;transform:scaleX(0.8990);">2</div>
<div class="ui" style="left:253.60px;top:112.60px;font-size:13px;color:#333;font-weight:700;transform:scaleX(0.8575);">x</div>
<div class="ui" style="left:260.90px;top:107.30px;font-size:6.6px;color:#1e8ad2;font-weight:700;transform:scaleX(0.9262);">2</div>
<div class="abs" style="left:277.1px;top:112px;width:1px;height:17.5px;background:#cbcbcb;"></div>
<svg class="abs" style="left:289px;top:112px;" width="18" height="17" viewBox="0 0 18 17"><path d="M1.6 15.4 L7.2 1.6 H10.4 L16 15.4 H12.6 L11.4 12.2 H6 L4.8 15.4 Z M7 9.6 H10.4 L8.7 5 Z" fill="#fff" stroke="#1c6fc6" stroke-width="1.6" stroke-linejoin="round" fill-rule="evenodd"/><path d="M8.7 6.6 L9.8 9.4 H7.6 Z" fill="#1c6fc6"/></svg>
<svg class="abs" style="left:312.1px;top:118.7px;" width="7.6" height="5.4" viewBox="0 0 7.6 5.4"><path d="M1 1 L3.8 4.4 L6.6 1" fill="none" stroke="#2a2a2a" stroke-width="1.6" stroke-linecap="round" stroke-linejoin="round"/></svg>
<svg class="abs" style="left:328px;top:112px;" width="17" height="18" viewBox="0 0 17 18"><path d="M11.4 1.6 L14.4 4 L8 10.6 L5 8.4 Z" fill="#fdfdfd" stroke="#4a4a4a" stroke-width="1.05" stroke-linejoin="round"/><path d="M5 8.4 L8 10.6 L6.8 11.8 L3.2 11.6 L2.4 12.2 L2.2 11.6 Z" fill="#555" stroke="#444" stroke-width="0.6"/><rect x="0" y="12.9" width="16.2" height="4.2" fill="#ffef10"/></svg>
<svg class="abs" style="left:350.2px;top:118.7px;" width="7.6" height="5.4" viewBox="0 0 7.6 5.4"><path d="M1 1 L3.8 4.4 L6.6 1" fill="none" stroke="#2a2a2a" stroke-width="1.6" stroke-linecap="round" stroke-linejoin="round"/></svg>
<svg class="abs" style="left:366px;top:112px;" width="17" height="18" viewBox="0 0 17 18"><path d="M3.2 11.6 L8 1.4 L12.8 11.6 M4.8 8.2 H11.2" fill="none" stroke="#3f3f3f" stroke-width="1.25" stroke-linejoin="round"/><rect x="0.2" y="12.9" width="16" height="4.2" fill="#f6001d"/></svg>
<svg class="abs" style="left:388.3px;top:118.7px;" width="7.6" height="5.4" viewBox="0 0 7.6 5.4"><path d="M1 1 L3.8 4.4 L6.6 1" fill="none" stroke="#2a2a2a" stroke-width="1.6" stroke-linecap="round" stroke-linejoin="round"/></svg>
<svg class="abs" style="left:428px;top:80px;" width="17" height="18" viewBox="0 0 17 18"><rect x="0.8" y="1" width="3.3" height="3.3" fill="#1e8ad2"/><rect x="0.8" y="7.1" width="3.3" height="3.3" fill="#1e8ad2"/><rect x="0.8" y="13.1" width="3.3" height="3.3" fill="#1e8ad2"/><path d="M6 2.6 H15.9" stroke="#3b3b3b" stroke-width="1.25"/><path d="M6 8.7 H15.9" stroke="#3b3b3b" stroke-width="1.25"/><path d="M6 14.7 H15.9" stroke="#3b3b3b" stroke-width="1.25"/></svg>
<svg class="abs" style="left:451.2px;top:86.9px;" width="7.6" height="5.4" viewBox="0 0 7.6 5.4"><path d="M1 1 L3.8 4.4 L6.6 1" fill="none" stroke="#2a2a2a" stroke-width="1.6" stroke-linecap="round" stroke-linejoin="round"/></svg>
<svg class="abs" style="left:465.5px;top:80px;" width="18" height="18" viewBox="0 0 18 18"><text x="0.3" y="5.2" font-family="Liberation Sans" font-weight="700" font-size="5.6" fill="#1e8ad2">1</text><text x="0.3" y="11.3" font-family="Liberation Sans" font-weight="700" font-size="5.6" fill="#1e8ad2">2</text><text x="0.3" y="17.4" font-family="Liberation Sans" font-weight="700" font-size="5.6" fill="#1e8ad2">3</text><path d="M5.8 2.6 H17" stroke="#3b3b3b" stroke-width="1.25"/><path d="M5.8 8.7 H17" stroke="#3b3b3b" stroke-width="1.25"/><path d="M5.8 14.7 H17" stroke="#3b3b3b" stroke-width="1.25"/></svg>
<svg class="abs" style="left:489px;top:86.9px;" width="7.6" height="5.4" viewBox="0 0 7.6 5.4"><path d="M1 1 L3.8 4.4 L6.6 1" fill="none" stroke="#2a2a2a" stroke-width="1.6" stroke-linecap="round" stroke-linejoin="round"/></svg>
<svg class="abs" style="left:504px;top:80px;" width="18" height="18" viewBox="0 0 18 18"><text x="0.3" y="5.2" font-family="Liberation Sans" font-weight="700" font-size="5.6" fill="#1e8ad2">1</text><text x="3.4" y="11.2" font-family="Liberation Sans" font-weight="700" font-size="5.8" fill="#1e8ad2">a</text><text x="8.6" y="17.4" font-family="Liberation Sans" font-weight="700" font-size="5.6" fill="#1e8ad2">i</text><path d="M5.6 2.6 H16.4 M9 8.7 H16.4 M12 14.7 H16.4" stroke="#3b3b3b" stroke-width="1.25"/></svg>
<svg class="abs" style="left:527.2px;top:86.9px;" width="7.6" height="5.4" viewBox="0 0 7.6 5.4"><path d="M1 1 L3.8 4.4 L6.6 1" fill="none" stroke="#2a2a2a" stroke-width="1.6" stroke-linecap="round" stroke-linejoin="round"/></svg>
<div class="abs" style="left:545px;top:80.5px;width:1px;height:17px;background:#cbcbcb;"></div>
<svg class="abs" style="left:558px;top:80px;" width="17" height="18" viewBox="0 0 17 18"><path d="M1 2.6 H15.4 M8.8 6.6 H15.4 M8.8 10.7 H15.4 M1 14.7 H15.4" stroke="#3b3b3b" stroke-width="1.25"/><path d="M6.6 8.7 H1.4 M3.8 6.2 L1.2 8.7 L3.8 11.2" fill="none" stroke="#1e8ad2" stroke-width="1.3" stroke-linecap="round" stroke-linejoin="round"/></svg>
<svg class="abs" style="left:584px;top:80px;" width="17" height="18" viewBox="0 0 17 18"><path d="M1 2.6 H15.4 M8.8 6.6 H15.4 M8.8 10.7 H15.4 M1 14.7 H15.4" stroke="#3b3b3b" stroke-width="1.25"/><path d="M1 8.7 H6.2 M3.8 6.2 L6.4 8.7 L3.8 11.2" fill="none" stroke="#1e8ad2" stroke-width="1.3" stroke-linecap="round" stroke-linejoin="round"/></svg>
<div class="abs" style="left:612px;top:80.5px;width:1px;height:17px;background:#cbcbcb;"></div>
<svg class="abs" style="left:624px;top:80px;" width="19" height="19" viewBox="0 0 19 19"><text x="0" y="7.9" font-family="Liberation Sans" font-weight="700" font-size="9.8" fill="#1e8ad2">A</text><text x="0.3" y="17.2" font-family="Liberation Sans" font-weight="700" font-size="9.6" fill="#3b3b3b">Z</text><path d="M13.2 1.4 V15.6 M9.8 12.2 L13.2 16 L16.6 12.2" fill="none" stroke="#3b3b3b" stroke-width="1.25" stroke-linecap="round" stroke-linejoin="round"/></svg>
<div class="abs" style="left:653.2px;top:80.5px;width:1px;height:17px;background:#cbcbcb;"></div>
<svg class="abs" style="left:668px;top:82px;" width="12" height="15" viewBox="0 0 12 15"><path d="M5.4 1.4 H10.8 M6 1.4 V13.4 M9 1.4 V13.4" stroke="#2e2e2e" stroke-width="1.3" fill="none"/><path d="M6 1.2 Q1.2 1.2 1.2 4.6 Q1.2 7.8 6 7.8 Z" fill="#2e2e2e"/></svg>
<svg class="abs" style="left:429px;top:112px;" width="16" height="17" viewBox="0 0 16 17"><path d="M0.8 2.7 H14.9" stroke="#3b3b3b" stroke-width="1.25"/><path d="M0.8 6.7 H11" stroke="#3b3b3b" stroke-width="1.25"/><path d="M0.8 10.6 H14.9" stroke="#3b3b3b" stroke-width="1.25"/><path d="M0.8 14.6 H11" stroke="#3b3b3b" stroke-width="1.25"/></svg>
<div class="abs" style="left:451.2px;top:109.3px;width:24px;height:23.3px;background:#c5c5c5;border-radius:3px;"></div>
<svg class="abs" style="left:455.5px;top:112px;" width="16" height="17" viewBox="0 0 16 17"><path d="M0.8 2.7 H14.9" stroke="#3b3b3b" stroke-width="1.25"/><path d="M2.8 6.7 H12.9" stroke="#3b3b3b" stroke-width="1.25"/><path d="M0.8 10.6 H14.9" stroke="#3b3b3b" stroke-width="1.25"/><path d="M2.8 14.6 H12.9" stroke="#3b3b3b" stroke-width="1.25"/></svg>
<svg class="abs" style="left:481.5px;top:112px;" width="16" height="17" viewBox="0 0 16 17"><path d="M0.8 2.7 H14.9" stroke="#3b3b3b" stroke-width="1.25"/><path d="M4.8 6.7 H14.9" stroke="#3b3b3b" stroke-width="1.25"/><path d="M0.8 10.6 H14.9" stroke="#3b3b3b" stroke-width="1.25"/><path d="M4.8 14.6 H14.9" stroke="#3b3b3b" stroke-width="1.25"/></svg>
<svg class="abs" style="left:507.5px;top:112px;" width="16" height="17" viewBox="0 0 16 17"><path d="M0.8 2.7 H14.9" stroke="#3b3b3b" stroke-width="1.25"/><path d="M0.8 6.7 H14.9" stroke="#3b3b3b" stroke-width="1.25"/><path d="M0.8 10.6 H14.9" stroke="#3b3b3b" stroke-width="1.25"/><path d="M0.8 14.6 H14.9" stroke="#3b3b3b" stroke-width="1.25"/></svg>
<div class="abs" style="left:535px;top:112px;width:1px;height:17.5px;background:#cbcbcb;"></div>
<svg class="abs" style="left:547px;top:112px;" width="18" height="17" viewBox="0 0 18 17"><path d="M7.6 2.7 H16.4" stroke="#3b3b3b" stroke-width="1.25"/><path d="M7.6 6.7 H16.4" stroke="#3b3b3b" stroke-width="1.25"/><path d="M7.6 10.6 H16.4" stroke="#3b3b3b" stroke-width="1.25"/><path d="M7.6 14.6 H16.4" stroke="#3b3b3b" stroke-width="1.25"/><path d="M3.4 1.8 V15.4 M1.2 4 L3.4 1.6 L5.6 4 M1.2 13.2 L3.4 15.6 L5.6 13.2" fill="none" stroke="#1e8ad2" stroke-width="1.3" stroke-linecap="round" stroke-linejoin="round"/></svg>
<svg class="abs" style="left:570.4px;top:118.5px;" width="7.6" height="5.4" viewBox="0 0 7.6 5.4"><path d="M1 1 L3.8 4.4 L6.6 1" fill="none" stroke="#2a2a2a" stroke-width="1.6" stroke-linecap="round" stroke-linejoin="round"/></svg>
<div class="abs" style="left:588.2px;top:112px;width:1px;height:17.5px;background:#cbcbcb;"></div>
<svg class="abs" style="left:602px;top:112px;" width="16" height="19" viewBox="0 0 16 19"><path d="M1.8 8 L7.8 2.4 L12.6 8 L7 13 Z" fill="#fff" stroke="#3a3a3a" stroke-width="1.15" stroke-linejoin="round"/><path d="M6.6 3.4 V1.6 Q6.6 0.6 7.8 0.8 Q8.8 1 8.8 2.4 V3.4" fill="none" stroke="#3a3a3a" stroke-width="1"/><path d="M12.4 6 Q14.6 8.6 13.6 11.4" fill="none" stroke="#1f6cc4" stroke-width="1.6" stroke-linecap="round"/><rect x="0" y="15.6" width="15.6" height="2.6" fill="#ececec"/></svg>
<svg class="abs" style="left:623px;top:118.5px;" width="7.6" height="5.4" viewBox="0 0 7.6 5.4"><path d="M1 1 L3.8 4.4 L6.6 1" fill="none" stroke="#2a2a2a" stroke-width="1.6" stroke-linecap="round" stroke-linejoin="round"/></svg>
<svg class="abs" style="left:638.5px;top:112px;" width="17" height="17" viewBox="0 0 17 17"><path d="M1 1.4 H15.8 M1 8.2 H15.8 M1.4 1 V14 M8.4 1 V14 M15.4 1 V14" stroke="#3a3a3a" stroke-width="1" stroke-dasharray="1 1.05" fill="none"/><path d="M0.8 15.2 H16" stroke="#2a2a2a" stroke-width="1.4"/></svg>
<svg class="abs" style="left:661px;top:118.5px;" width="7.6" height="5.4" viewBox="0 0 7.6 5.4"><path d="M1 1 L3.8 4.4 L6.6 1" fill="none" stroke="#2a2a2a" stroke-width="1.6" stroke-linecap="round" stroke-linejoin="round"/></svg>
<div class="abs" style="left:696.2px;top:72.2px;width:1px;height:61.4px;background:#cbcbcb;"></div>
<div class="abs" style="left:707.5px;top:73px;width:915px;height:58px;background:#fff;border:1px solid #cdcdcd;border-radius:3px;"></div>
<div class="abs tile" style="left:730px;top:79px;width:69.5px;height:45.5px;"><div class="tl"></div></div>
<div class="ui" style="left:744.25px;top:108.80px;font-size:9.3px;color:#1a1a1a;transform:scaleX(1.0163);-webkit-text-stroke:0.25px #1a1a1a;">Emphasis</div>
<div class="ui" style="left:736.00px;top:88.00px;font-size:10px;color:#1a1a1a;font-style:italic;transform:scaleX(0.9400);">AaBbCcDdEe</div>
<div class="abs tile" style="left:810px;top:79px;width:69.5px;height:45.5px;"><div class="tl"></div></div>
<div class="ui" style="left:823.25px;top:108.80px;font-size:9.3px;color:#1a1a1a;transform:scaleX(1.0259);-webkit-text-stroke:0.25px #1a1a1a;">Heading 1</div>
<div class="ui" style="left:813.90px;top:87.20px;font-size:18px;color:#2f5b98;font-family:'Liberation Serif',serif;transform:scaleX(0.8334);-webkit-text-stroke:0.3px #2f5b98;">AaBbCcD</div>
<div class="abs tile" style="left:890px;top:79px;width:69.5px;height:45.5px;"><div class="tl"></div></div>
<div class="ui" style="left:902.75px;top:108.80px;font-size:9.3px;color:#1a1a1a;transform:scaleX(1.0495);-webkit-text-stroke:0.25px #1a1a1a;">Heading 2</div>
<div class="ui" style="left:893.70px;top:87.60px;font-size:15px;color:#4a79b6;font-family:'Liberation Serif',serif;transform:scaleX(0.8123);-webkit-text-stroke:0.2px #4a79b6;">AaBbCcDdE</div>
<div class="abs" style="left:964.5px;top:74.8px;width:80.5px;height:53px;background:#e4ecf7;border:1px solid #84a7d3;border-radius:4px;"></div>
<div class="abs tile" style="left:970px;top:79px;width:69.5px;height:45.5px;"><div class="tl"></div></div>
<div class="ui" style="left:989.25px;top:108.80px;font-size:9.3px;color:#1a1a1a;transform:scaleX(1.0510);-webkit-text-stroke:0.25px #1a1a1a;">Normal</div>
<div class="ui" style="left:976.00px;top:88.00px;font-size:10px;color:#1a1a1a;transform:scaleX(0.9400);">AaBbCcDdEe</div>
<div class="abs tile" style="left:1050px;top:79px;width:69.5px;height:45.5px;"><div class="tl"></div></div>
<div class="ui" style="left:1054.00px;top:108.80px;font-size:9.3px;color:#1a1a1a;transform:scaleX(1.0614);-webkit-text-stroke:0.25px #1a1a1a;">Normal Indent</div>
<div class="ui" style="left:1056.00px;top:88.00px;font-size:10px;color:#1a1a1a;transform:scaleX(0.9400);">AaBbCcDdEe</div>
<div class="abs tile" style="left:1130px;top:79px;width:69.5px;height:45.5px;"><div class="tl"></div></div>
<div class="ui" style="left:1150.25px;top:108.80px;font-size:9.3px;color:#1a1a1a;transform:scaleX(1.0766);-webkit-text-stroke:0.25px #1a1a1a;">Strong</div>
<div class="ui" style="left:1134.50px;top:88.00px;font-size:10px;color:#1a1a1a;font-weight:700;transform:scaleX(0.9463);">AaBbCcDdEe</div>
<div class="abs tile" style="left:1210px;top:79px;width:69.5px;height:45.5px;"><div class="tl"></div></div>
<div class="ui" style="left:1228.00px;top:108.80px;font-size:9.3px;color:#1a1a1a;transform:scaleX(1.0960);-webkit-text-stroke:0.25px #1a1a1a;">Subtitle</div>
<div class="abs" style="left:1212.5px;top:80px;width:66px;height:30px;overflow:hidden"><div class="ui" style="left:0.6px;top:7.6px;font-size:10px;color:#6d6d6d;letter-spacing:1.15px;">AaBbCcDdEe</div></div>
<div class="abs tile" style="left:1290px;top:79px;width:69.5px;height:45.5px;"><div class="tl"></div></div>
<div class="ui" style="left:1315.25px;top:108.80px;font-size:9.3px;color:#1a1a1a;transform:scaleX(1.1321);-webkit-text-stroke:0.25px #1a1a1a;">Title</div>
<div class="ui" style="left:1293.00px;top:88.00px;font-size:10.8px;color:#111;font-weight:700;transform:scaleX(0.9193);">AaBbCcDdEe</div>
<div class="abs tile" style="left:1370px;top:79px;width:69.5px;height:45.5px;"><div class="tl"></div></div>
<div class="ui" style="left:1379.75px;top:108.80px;font-size:9.3px;color:#1a1a1a;transform:scaleX(1.0503);-webkit-text-stroke:0.25px #1a1a1a;">No Spacing</div>
<div class="ui" style="left:1376.00px;top:88.00px;font-size:10px;color:#1a1a1a;transform:scaleX(0.9400);">AaBbCcDdEe</div>
<div class="abs tile" style="left:1450px;top:79px;width:69.5px;height:45.5px;"><div class="tl"></div></div>
<div class="ui" style="left:1454.25px;top:108.80px;font-size:9.3px;color:#1a1a1a;transform:scaleX(1.0082);-webkit-text-stroke:0.25px #1a1a1a;">Subtle Emph...</div>
<div class="ui" style="left:1456.00px;top:88.00px;font-size:10px;color:#484848;font-style:italic;transform:scaleX(0.9400);">AaBbCcDdEe</div>
<div class="abs tile" style="left:1530px;top:79px;width:69.5px;height:45.5px;"><div class="tl"></div></div>
<div class="ui" style="left:1535.00px;top:108.80px;font-size:9.3px;color:#1a1a1a;-webkit-text-stroke:0.25px #1a1a1a;">Intense Emp...</div>
<div class="ui" style="left:1536.00px;top:88.00px;font-size:10px;color:#4d7dbd;font-style:italic;transform:scaleX(0.9400);">AaBbCcDdEe</div>
<svg class="abs" style="left:1610px;top:96px;" width="8" height="11" viewBox="0 0 8 11"><path d="M2.8 2.4 L6 5.6 L2.8 8.8" fill="none" stroke="#3a3a3a" stroke-width="1.3" stroke-linecap="round" stroke-linejoin="round"/></svg>
<svg class="abs" style="left:1628px;top:76px;" width="32" height="32" viewBox="0 0 32 32"><rect x="1.6" y="1.8" width="26.6" height="26.4" rx="1" fill="#f8f8f8" stroke="#333" stroke-width="1.2"/><path d="M28.6 10.4 Q30.6 10 30.2 12 L20.2 26 L17 24 Z" fill="#f4f4f4" stroke="#333" stroke-width="1.1" stroke-linejoin="round"/><path d="M17 23.6 L20.4 26 Q18 30.6 9.6 29.6 Q13.6 28 13.6 25.6 Q14.6 22.6 17 23.6 Z" fill="#3f86cf" stroke="#2d6db4" stroke-width="0.6"/></svg>
<div class="ui" style="left:1627.50px;top:109.20px;font-size:11px;color:#1e1e1e;transform:scaleX(0.9681);-webkit-text-stroke:0.32px #1e1e1e;">Styles</div>
<div class="ui" style="left:1631.00px;top:121.20px;font-size:11px;color:#1e1e1e;transform:scaleX(0.8758);-webkit-text-stroke:0.32px #1e1e1e;">Pane</div>
<div class="abs" style="left:1670.5px;top:72.2px;width:1px;height:61.4px;background:#cbcbcb;"></div>
<svg class="abs" style="left:1688px;top:74px;" width="24" height="34" viewBox="0 0 24 34"><rect x="5" y="2.8" width="12.9" height="21.4" rx="2.2" fill="#74b5e8" stroke="#2a78c2" stroke-width="1.25"/><path d="M2.1 17.2 V20 Q2.1 26.7 11.45 26.7 Q20.8 26.7 20.8 20 V17.2" fill="none" stroke="#333" stroke-width="1.15"/><path d="M11.45 26.7 V30.2 M7 30.4 H16" stroke="#333" stroke-width="1.15"/></svg>
<div class="ui" style="left:1687.50px;top:109.20px;font-size:11px;color:#1e1e1e;transform:scaleX(1.0223);-webkit-text-stroke:0.32px #1e1e1e;">Dictate</div>
<svg class="abs" style="left:1719.9px;top:88.7px;" width="7.6" height="5.4" viewBox="0 0 7.6 5.4"><path d="M1 1 L3.8 4.4 L6.6 1" fill="none" stroke="#2a2a2a" stroke-width="1.6" stroke-linecap="round" stroke-linejoin="round"/></svg>
<div class="abs" style="left:1739.5px;top:72.2px;width:1px;height:61.4px;background:#cbcbcb;"></div>
<svg class="abs" style="left:1760px;top:74px;" width="32" height="34" viewBox="0 0 32 34"><path d="M2 5.2 H12.6 L21.4 14 V30.4 H2 Z" fill="#f3f8fc" stroke="#a9cbe6" stroke-width="1.1" stroke-linejoin="round"/><path d="M5.2 18.4 L8 15.6 L14.6 22.2 L11.8 25 Z" fill="none" stroke="#a9cbe6" stroke-width="1"/><path d="M15 7.6 L21.4 1.4 L29 9 L22.6 15.2 Z" fill="#bcdaee" stroke="#a3c9e6" stroke-width="1.1" stroke-linejoin="round"/><path d="M17.4 8.4 L22 13 M19.6 6.2 L24.2 10.8 M24 3.4 L26.2 1.2 L28.8 3.8 L26.6 6" fill="none" stroke="#a9cbe6" stroke-width="1"/></svg>
<div class="ui" style="left:1753.50px;top:109.20px;font-size:11px;color:#a3a3a3;transform:scaleX(1.0400);-webkit-text-stroke:0.2px #a3a3a3;">Sensitivity</div>
<svg class="abs" style="left:1793px;top:88.5px;" width="7.6" height="5.4" viewBox="0 0 7.6 5.4"><path d="M1 1 L3.8 4.4 L6.6 1" fill="none" stroke="#b4b4b4" stroke-width="1.5" stroke-linecap="round" stroke-linejoin="round"/></svg>
<div class="abs" style="left:1818px;top:72.2px;width:1px;height:61.4px;background:#cbcbcb;"></div>
<svg class="abs" style="left:1841.5px;top:74.2px;" width="33" height="33" viewBox="0 0 33 33"><circle cx="16.5" cy="16.5" r="16" fill="#0abf90"/><path d="M23.4 9.6 A9 9 0 1 0 25.4 18.4 H18.2 M25.6 18.4 V14.6" fill="none" stroke="#fff" stroke-width="2.5" stroke-linecap="round" stroke-linejoin="round"/></svg>
<div class="ui" style="left:1846.00px;top:109.20px;font-size:11px;color:#1e1e1e;transform:scaleX(0.9290);-webkit-text-stroke:0.32px #1e1e1e;">Open</div>
<div class="ui" style="left:1831.00px;top:121.20px;font-size:11px;color:#1e1e1e;-webkit-text-stroke:0.32px #1e1e1e;">Grammarly</div>
<div class="ui" style="left:24.00px;top:1060.60px;font-size:12.2px;color:#4c4c4c;transform:scaleX(1.0303);">Page 2 of 4</div>
<div class="ui" style="left:109.30px;top:1060.60px;font-size:12.2px;color:#4c4c4c;transform:scaleX(0.9941);">1713 words</div>
<svg class="abs" style="left:191px;top:1061px;" width="18" height="15" viewBox="0 0 18 15"><path d="M8 2.6 Q4.6 1 1.2 2 V11 Q4.6 10 8 11.6 Z" fill="none" stroke="#555" stroke-width="1"/><path d="M8 2.6 Q9.6 1.8 11 1.6 M8 11.6 Q11 10 14 11" fill="none" stroke="#555" stroke-width="1"/><path d="M8 11.4 V13.6" stroke="#555" stroke-width="1"/><path d="M12 3.2 L16.4 8 M16.4 3.2 L12 8" stroke="#555" stroke-width="1.1"/></svg>
<div class="ui" style="left:230.70px;top:1060.60px;font-size:12.2px;color:#4c4c4c;transform:scaleX(1.0307);">English (United States)</div>
<svg class="abs" style="left:1498px;top:1062px;" width="15.5" height="13" viewBox="0 0 15.5 13"><rect x="0.8" y="1" width="13.8" height="10.8" rx="0.8" fill="none" stroke="#555" stroke-width="1.1"/><path d="M3.4 5 V3.6 H5.2 M10.2 3.6 H12 V5 M12 7.8 V9.2 H10.2 M5.2 9.2 H3.4 V7.8" fill="none" stroke="#555" stroke-width="1"/></svg>
<div class="ui" style="left:1520.00px;top:1060.60px;font-size:12.2px;color:#4c4c4c;">Focus</div>
<div class="abs" style="left:1564px;top:1058px;width:36.7px;height:22px;background:#b3b3b3;"></div>
<svg class="abs" style="left:1574.5px;top:1061.5px;" width="16" height="15" viewBox="0 0 16 15"><rect x="0.9" y="0.9" width="13.8" height="12.8" fill="#f4f4f4" stroke="#4a4a4a" stroke-width="1"/><path d="M3 3.6 H12.6 M3 5.6 H12.6 M3 7.6 H12.6 M3 9.6 H12.6 M3 11.6 H12.6" stroke="#4a4a4a" stroke-width="0.8"/></svg>
<svg class="abs" style="left:1609.5px;top:1061px;" width="18" height="16" viewBox="0 0 18 16"><rect x="0.9" y="0.9" width="11.6" height="11.6" fill="none" stroke="#555" stroke-width="1"/><path d="M3 3.6 H10.6 M3 5.8 H10.6 M3 8 H8" stroke="#555" stroke-width="0.9"/><circle cx="12" cy="11" r="4" fill="#555"/><path d="M9.6 9.6 Q12 11 14.6 9.4 M10 12.6 Q12 11.6 14.2 13" stroke="#ddd" stroke-width="0.7" fill="none"/></svg>
<svg class="abs" style="left:1646px;top:1062px;" width="17" height="14" viewBox="0 0 17 14"><path d="M0.8 1.6 H3.4 M5.4 1.6 H15.6 M3.6 5.2 H5.4 M7.4 5.2 H15.6 M3.6 8.6 H5.4 M7.4 8.6 H13.6 M0.8 12 H3.4 M5.4 12 H15.6" stroke="#555" stroke-width="1.1"/></svg>
<svg class="abs" style="left:1682px;top:1062px;" width="16" height="14" viewBox="0 0 16 14"><path d="M0.8 1.6 H14.8 M0.8 5.2 H14.8 M0.8 8.6 H14.8 M0.8 12 H10.6" stroke="#555" stroke-width="1.1"/></svg>
<div class="abs" style="left:1716px;top:1068px;width:8px;height:1.6px;background:#3e3e3e;"></div>
<div class="abs" style="left:1732.3px;top:1066.8px;width:97px;height:4px;background:#a0a0a0;border-radius:2px;"></div>
<div class="abs" style="left:1779.3px;top:1062.9px;width:11.8px;height:11.8px;background:#fff;border-radius:50%;box-shadow:0 0.5px 1.5px rgba(0,0,0,.45);"></div>
<div class="abs" style="left:1837.7px;top:1068px;width:8.3px;height:1.6px;background:#3e3e3e;"></div>
<div class="abs" style="left:1841.1px;top:1064.6px;width:1.6px;height:8.4px;background:#3e3e3e;"></div>
<div class="ui" style="left:1864.00px;top:1060.60px;font-size:12.2px;color:#4c4c4c;transform:scaleX(0.9710);">140%</div>
</div>
</body></html>
